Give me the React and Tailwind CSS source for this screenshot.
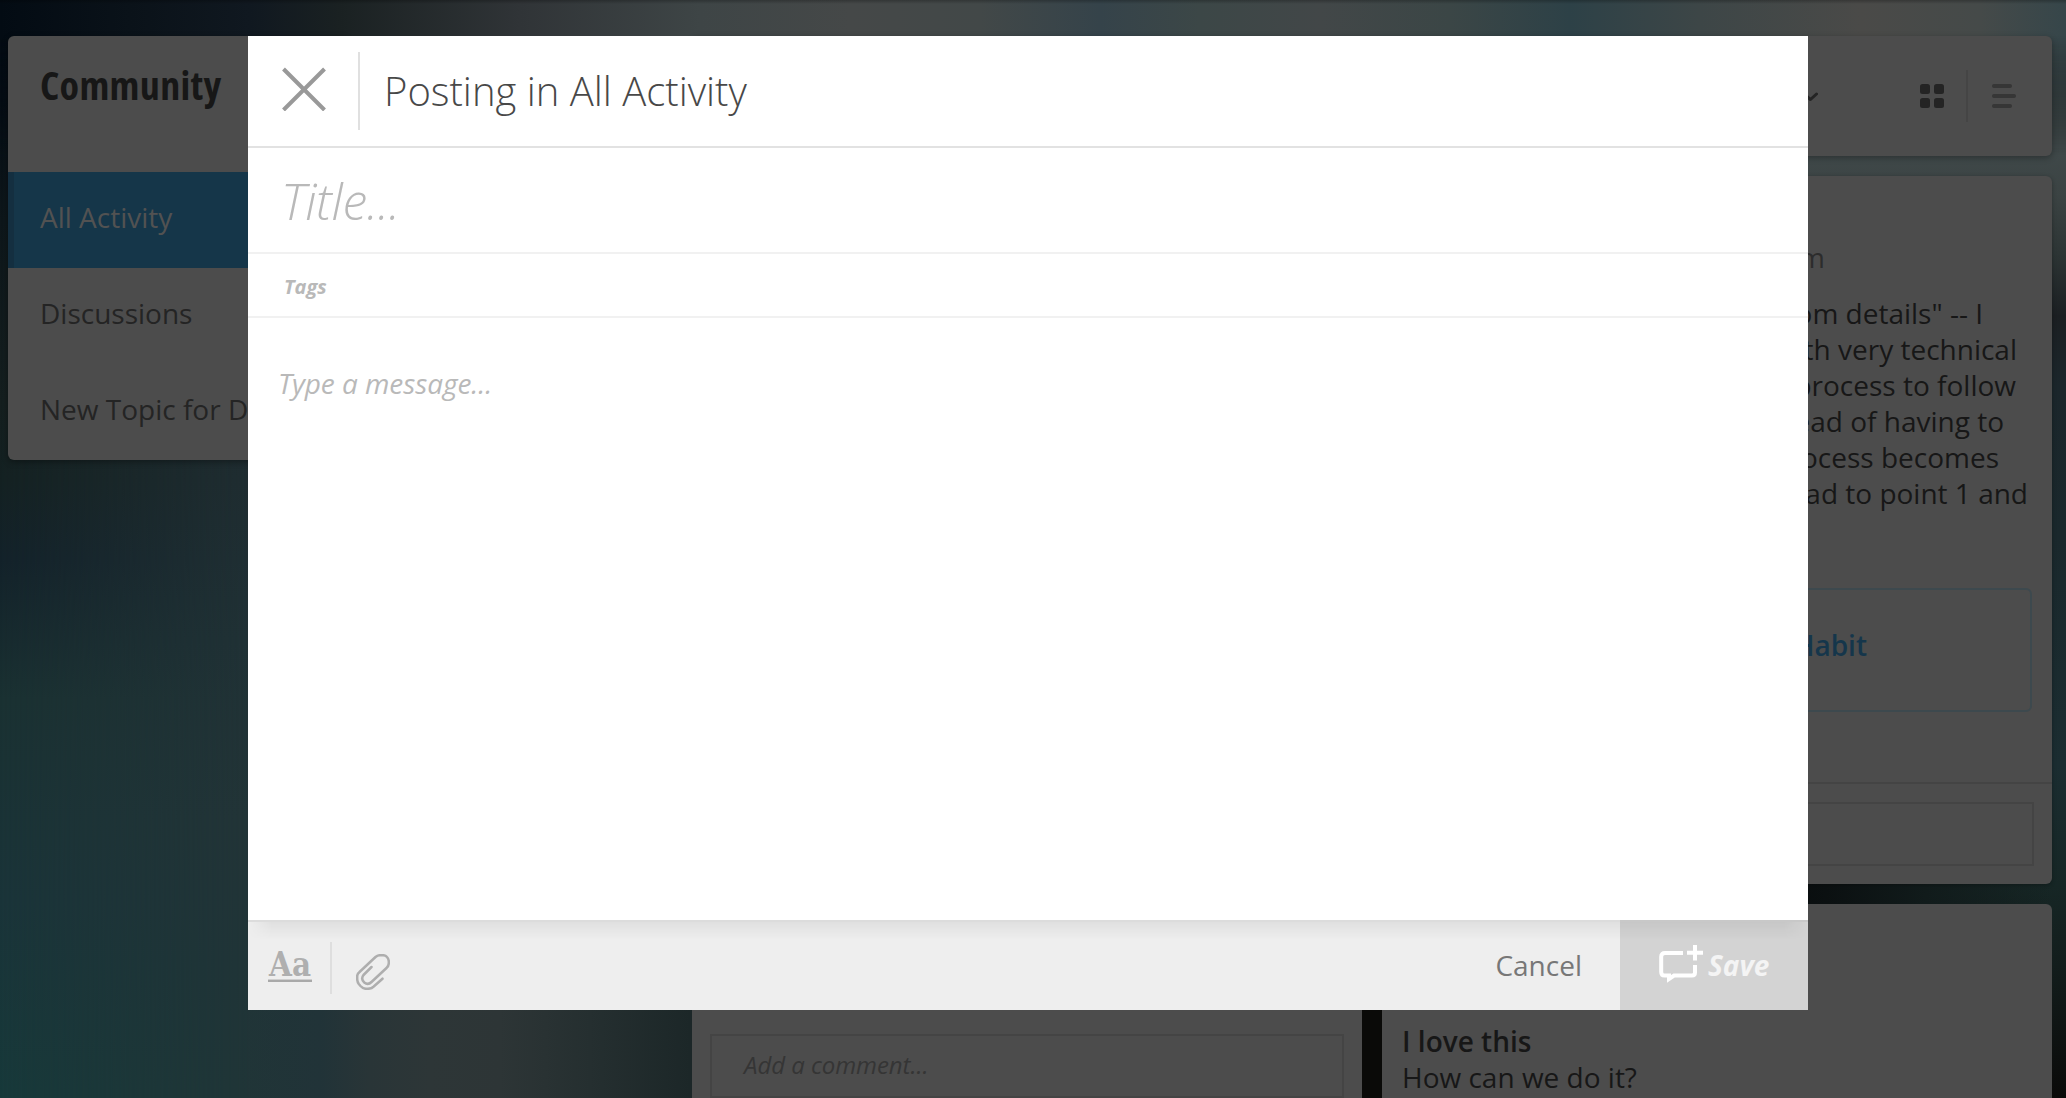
import React from "react";

const NAV = ["Discussions", "New Topic for D"];

const POST_LINES = [
  ['"from details" -- I', "pr-[47px]"],
  ["with very technical", "pr-[13px]"],
  ["process to follow", "pr-[14px]"],
  ["instead of having to", "pr-[26px]"],
  ["process becomes", "pr-[31px]"],
  ["lead to point 1 and", "pr-[2px]"],
];

function Backdrop() {
  return (
    <div className="absolute inset-0 bg-[#0a0a08]">
      <div className="absolute left-0 top-0 h-full w-[800px] bg-[linear-gradient(180deg,#030b13_0px,#070e15_100px,#0e171b_220px,#151f1f_400px,#142122_480px,#13222a_560px,#1a3132_700px,#1a3439_900px,#17393a_1098px)]" />
      <div className="absolute left-0 top-0 h-full w-[800px] bg-[linear-gradient(180deg,#1a2022_0px,#1f2d31_480px,#203135_640px,#223437_820px,#203437_960px,#203537_1098px)] [mask-image:linear-gradient(90deg,transparent_0px,black_250px)]" />
      <div className="absolute left-0 top-[940px] h-[158px] w-[800px] bg-[linear-gradient(90deg,transparent_240px,#213338_320px,#293537_370px,#2d3637_430px,#2d3536_500px,#252f30_590px,#1c2728_690px)]" />
      <div className="absolute left-0 top-0 h-[180px] w-full bg-[linear-gradient(90deg,#030b13_0px,#0a1219_130px,#101820_250px,#1a2122_340px,#303437_520px,#3e4546_700px,#454848_850px,#424848_980px,#35434a_1100px,#3c4747_1200px,#424748_1320px,#3b4646_1450px,#2d4147_1570px,#3d4647_1700px,#4a4a48_1860px,#454a49_1980px,#36464a_2066px)] [mask-image:linear-gradient(180deg,black_36px,transparent_160px)]" />
      <div className="absolute right-0 top-[36px] h-[1062px] w-[300px] bg-[linear-gradient(180deg,#3b484b_0px,#40494a_110px,#3b4343_160px,#2c3434_220px,#1b1f22_280px,#1b262b_350px,#1a282c_500px,#1b2d31_730px,#162625_850px,#131d1c_930px,#0a0a09_1062px)] [mask-image:linear-gradient(180deg,transparent_0px,black_120px)]" />
      <div className="absolute right-0 top-[800px] h-[150px] w-[300px] bg-[linear-gradient(90deg,#080b0c_0px,#0b1011_60px,#111b1b_160px,transparent_285px)]" />
      <div className="absolute inset-x-0 top-0 h-[4px] bg-gradient-to-b from-black/25 to-transparent" />
    </div>
  );
}

function Sidebar() {
  return (
    <aside className="h-[424px] w-[340px] overflow-hidden rounded-[6px] bg-[#4c4c4c] text-[28px] text-[#242424] shadow-[0_2px_6px_rgba(0,0,0,0.35)]">
      <h1 className="h-[136px] pl-8 text-[40px] leading-[98px] font-bold tracking-[0.3px] text-[#171717] [font-stretch:75%]">
        Community
      </h1>
      <div className="flex h-24 items-center border-l-[6px] border-[#142f40] bg-[#153649] pb-[6px] pl-[26px] text-[#525252]">
        All Activity
      </div>
      {NAV.map((label) => (
        <div key={label} className="flex h-24 items-center whitespace-nowrap pb-[6px] pl-8">
          {label}
        </div>
      ))}
    </aside>
  );
}

function Toolbar() {
  return (
    <div className="flex h-[120px] w-full items-center justify-end rounded-[6px] bg-[#4c4c4c] pr-[35px] shadow-[0_2px_6px_rgba(0,0,0,0.3)]">
      <svg width="18" height="12" viewBox="0 0 18 12" className="mr-[102px]" fill="none" stroke="#242424" strokeWidth="3" strokeLinecap="round" strokeLinejoin="round">
        <path d="M4 4 L10.500 9.500 L16.500 4" />
      </svg>
      <svg width="24" height="24" fill="#242424">
        <rect width="10" height="10" rx="2.500" />
        <rect x="14" width="10" height="10" rx="2.500" />
        <rect y="14" width="10" height="10" rx="2.500" />
        <rect x="14" y="14" width="10" height="10" rx="2.500" />
      </svg>
      <div className="mr-[23px] ml-[22px] h-[52px] w-[2px] bg-[#454545]" />
      <svg width="26" height="24" fill="#363636">
        <rect x="1" width="20" height="4" rx="2" />
        <rect x="1" y="10" width="24" height="4" rx="2" />
        <rect x="1" y="20" width="20" height="4" rx="2" />
      </svg>
    </div>
  );
}

function CommentBox({ children }) {
  return (
    <div className="mx-[18px] flex h-16 items-center border-2 border-[#444] pb-[2px] pl-[32px] text-[24px] font-normal italic tracking-[-0.05px] text-[#353535]">
      {children}
    </div>
  );
}

function Feed() {
  return (
    <div className="flex w-[1360px] flex-col gap-5">
      <Toolbar />
      <div className="flex gap-5">
        <article className="flex h-[940px] w-[670px] flex-col bg-[#4c4c4c] pt-[858px]">
          <CommentBox>Add a comment...</CommentBox>
        </article>
        <div className="flex w-[670px] flex-col gap-5 text-[28px] leading-9 text-[#171717]">
          <article className="h-[708px] rounded-[6px] bg-[#4c4c4c] pt-[63px] shadow-[0_1px_4px_rgba(0,0,0,0.3)]">
            <div className="pr-[227px] text-right text-[#2c2c2c]">pm</div>
            <div className="mt-5 px-[22px] text-right">
              {POST_LINES.map(([text, pad]) => (
                <div key={text} className={pad}>
                  {text}
                </div>
              ))}
            </div>
            <div className="mx-5 mt-[77px] flex h-[124px] items-center justify-end rounded-[6px] border-2 border-[#3d494e] pr-[163px] pb-[10px] font-semibold text-[#15364b]">
              Habit
            </div>
            <div className="mt-[70px] mb-[18px] h-[2px] bg-[#444]" />
            <CommentBox />
          </article>
          <article className="h-[220px] rounded-t-[6px] bg-[#4c4c4c] px-5 pt-[119px]">
            <div className="font-semibold">I love this</div>
            <div>How can we do it?</div>
          </article>
        </div>
      </div>
    </div>
  );
}

function ComposerFooter() {
  return (
    <footer className="relative flex h-[90px] items-stretch border-t-2 border-[#dcdcdc] bg-[#eee]">
      <div className="ml-5 mt-[28px] h-[32px] w-11">
        <svg width="44" height="32" viewBox="0 0 44 32" className="overflow-visible">
          <text x="1" y="26" fontFamily="'DejaVu Serif', serif" fontWeight="700" fontSize="33" fill="#afafaf" textLength="42" lengthAdjust="spacingAndGlyphs">
            Aa
          </text>
          <rect y="29" width="44" height="1" fill="#cfcfcf" />
          <rect y="30" width="44" height="2" fill="#a9a9a9" />
        </svg>
      </div>
      <div className="mt-5 ml-[18px] h-[52px] w-[2px] bg-[#dedede]" />
      <svg width="34" height="36" viewBox="0 0 34 36" className="mt-8 ml-6" fill="none" stroke="#aeaeae" strokeWidth="2.500" strokeLinecap="round" strokeLinejoin="round">
        <path d="M26.500 24.700 L18 32.300 Q15.500 34.800 12 34.800 H10 Q7 34.800 4.500 32 L2.800 30 Q1.200 28 1.200 25 V22 Q1.200 20 3.500 18 L19.500 3 Q21.500 1.200 24 1.200 H27 Q29.500 1.200 31 3 Q32.800 5 32.800 7.500 V9 Q32.800 12 30.500 14 L15.500 28 Q12 31.500 8.300 28.500 Q4.500 25 7.500 21 L15.500 13" />
      </svg>
      <div className="grow" />
      <button className="pr-[38px] pb-[3px] text-[28px] font-normal text-[#777]">Cancel</button>
      <button className="-mt-[2px] flex w-[188px] items-center border-t-2 border-[#c8c8c8] bg-[#d3d3d3] pl-[38px] text-[28px] font-bold italic text-[#f4f4f4]">
        <svg width="46" height="40" viewBox="0 0 46 40" className="-mt-1" fill="none" stroke="#fff" strokeWidth="4">
          <path d="M25 9 H7 Q3.200 9 3.200 12.500 V28 Q3.200 31.500 6.500 31.500 H11 V35 L16 31.500 H34 Q37 31.500 37 28.500 V21" />
          <path d="M37 1 V16.500 M29 8.800 H45" />
        </svg>
        <span className="ml-1 pb-[3px]">Save</span>
      </button>
      <div className="pointer-events-none absolute inset-x-0 top-0 h-[18px] bg-gradient-to-b from-black/[0.055] to-transparent [mask-image:linear-gradient(90deg,transparent,black_24px,black_1536px,transparent)]" />
    </footer>
  );
}

function Composer() {
  return (
    <section className="absolute left-[248px] top-[36px] flex h-[974px] w-[1560px] flex-col bg-white text-[#b9b9b9]">
      <header className="flex h-28 border-b-2 border-[#e2e2e2]">
        <svg width="44" height="44" viewBox="0 0 44 44" className="mt-[31px] ml-[34px]" stroke="#999" strokeWidth="4">
          <path d="M1.500 2 L42.500 43 M42.500 2 L1.500 43" />
        </svg>
        <div className="mt-4 ml-8 h-[78px] w-[2px] bg-[#e0e0e0]" />
        <h2 className="ml-6 text-[40px] leading-[109px] font-light text-[#484848]">Posting in All Activity</h2>
      </header>
      <div className="h-[106px] border-b-2 border-[#f1f1f1] pl-[33px] text-[50px] leading-[107px] font-light tracking-[-0.4px] italic">
        Title...
      </div>
      <div className="h-16 border-b-2 border-[#f1f1f1] pl-[36px] text-[20px] leading-[66px] font-bold italic">
        Tags
      </div>
      <div className="grow pt-[47px] pl-[30px] text-[28px] leading-9 italic font-normal tracking-[-0.06px]">Type a message...</div>
      <ComposerFooter />
    </section>
  );
}

export default function App() {
  return (
    <div className="relative h-[1098px] w-[2066px] overflow-hidden font-['Open_Sans',sans-serif]">
      <Backdrop />
      <main className="relative flex justify-between pt-9 pr-[14px] pl-2">
        <Sidebar />
        <Feed />
      </main>
      <Composer />
    </div>
  );
}
